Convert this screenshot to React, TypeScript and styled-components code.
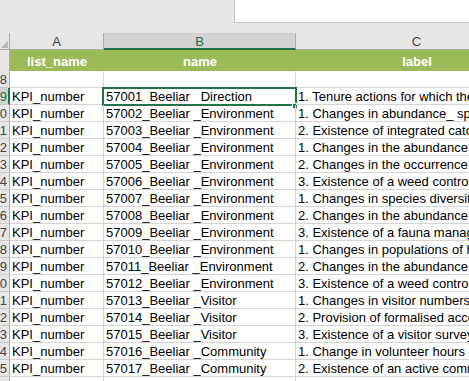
import React from "react";
import styled, { createGlobalStyle, css } from "styled-components";

const GlobalStyle = createGlobalStyle`
  html, body { margin: 0; padding: 0; background: #ffffff; }
  body { font-family: "Liberation Sans", Arial, sans-serif; overflow: hidden; }
`;

const GRID = "#d4d4d4";
const HEAD_LINE = "#ababab";
const HEAD_BG = "#e6e6e6";
const SEL_BG = "#d2d2d2";
const EXCEL_GREEN = "#217346";

const Page = styled.div`
  width: 469px;
  height: 381px;
  overflow: hidden;
  background: #ffffff;
`;

const TopBand = styled.div`
  height: 33px;
  background: #e6e6e6;
  display: flex;
  align-items: flex-start;
`;

const Spacer = styled.div`
  width: 234px;
  flex: none;
`;

const FormulaBox = styled.div`
  flex: 1;
  height: 23px;
  box-sizing: border-box;
  background: #ffffff;
  border-left: 1px solid #c6c6c6;
  border-bottom: 1px solid #c6c6c6;
`;

const Sheet = styled.div`
  display: grid;
  grid-template-columns: 10px 94px 192px 242px;
  grid-auto-rows: 17px;
  grid-template-rows: 17px 21px;
  width: 538px;
  font-size: 13px;
`;

const Corner = styled.div`
  position: relative;
  box-sizing: border-box;
  background: ${HEAD_BG};
  border-right: 1px solid ${HEAD_LINE};
  border-bottom: 1px solid ${HEAD_LINE};
  &::after {
    content: "";
    position: absolute;
    right: 1px;
    bottom: 1px;
    width: 0;
    height: 0;
    border-left: 7px solid transparent;
    border-bottom: 7px solid #b9b9b9;
  }
`;

const ColHeader = styled.div<{ $selected?: boolean }>`
  box-sizing: border-box;
  background: ${HEAD_BG};
  border-right: 1px solid ${HEAD_LINE};
  border-bottom: 1px solid ${HEAD_LINE};
  color: #444444;
  display: flex;
  justify-content: center;
  align-items: center;
  padding-top: 2px;
  line-height: 14px;
  ${(p) =>
    p.$selected &&
    css`
      background: ${SEL_BG};
      color: ${EXCEL_GREEN};
      border-bottom: 2px solid ${EXCEL_GREEN};
    `}
`;

const TitleCell = styled.div`
  box-sizing: border-box;
  background: #9bbb59;
  color: #ffffff;
  font-weight: bold;
  display: flex;
  justify-content: center;
  align-items: center;
  padding-top: 1px;
  white-space: nowrap;
  overflow: hidden;
`;

const TitleHead = styled.div`
  box-sizing: border-box;
  background: ${HEAD_BG};
  border-right: 1px solid ${HEAD_LINE};
`;

const RowHeader = styled.div<{ $selected?: boolean }>`
  box-sizing: border-box;
  background: ${HEAD_BG};
  border-right: 1px solid ${HEAD_LINE};
  border-bottom: 1px solid #c9c9c9;
  color: #444444;
  display: flex;
  justify-content: flex-end;
  align-items: flex-end;
  line-height: 14px;
  overflow: hidden;
  white-space: nowrap;
  padding-right: 2px;
  ${(p) =>
    p.$selected &&
    css`
      background: ${SEL_BG};
      color: ${EXCEL_GREEN};
      border-right: 2px solid ${EXCEL_GREEN};
      padding-right: 1px;
    `}
`;

const Cell = styled.div<{ $active?: boolean }>`
  position: relative;
  box-sizing: border-box;
  border-right: 1px solid ${GRID};
  border-bottom: 1px solid ${GRID};
  color: #000000;
  display: flex;
  align-items: flex-end;
  padding-left: 2px;
  line-height: 14px;
  white-space: pre;
  overflow: ${(p) => (p.$active ? "visible" : "hidden")};
`;

const ActiveText = styled.span`
  display: block;
  align-self: flex-start;
  margin-top: 2px;
  height: 12px;
  line-height: 14px;
  overflow: hidden;
`;

const SelectionBox = styled.div`
  position: absolute;
  left: -2px;
  top: -1px;
  width: 195px;
  height: 19px;
  box-sizing: border-box;
  border: 2px solid ${EXCEL_GREEN};
  pointer-events: none;
`;

const FillHandle = styled.div`
  position: absolute;
  left: 188px;
  top: 14px;
  width: 6px;
  height: 6px;
  box-sizing: border-box;
  background: ${EXCEL_GREEN};
  border: 1px solid #ffffff;
`;

type Row = { num: number; a: string; b: string; c: string };

const rows: Row[] = [
  { num: 8, a: "", b: "", c: "" },
  { num: 9, a: "KPI_number", b: "57001_Beeliar _Direction", c: "1. Tenure actions for which the department is responsible" },
  { num: 10, a: "KPI_number", b: "57002_Beeliar _Environment", c: "1. Changes in abundance_ species of wetland birds" },
  { num: 11, a: "KPI_number", b: "57003_Beeliar _Environment", c: "2. Existence of integrated catchment management" },
  { num: 12, a: "KPI_number", b: "57004_Beeliar _Environment", c: "1. Changes in the abundance of native vegetation" },
  { num: 13, a: "KPI_number", b: "57005_Beeliar _Environment", c: "2. Changes in the occurrence of weeds" },
  { num: 14, a: "KPI_number", b: "57006_Beeliar _Environment", c: "3. Existence of a weed control program" },
  { num: 15, a: "KPI_number", b: "57007_Beeliar _Environment", c: "1. Changes in species diversity of native fauna" },
  { num: 16, a: "KPI_number", b: "57008_Beeliar _Environment", c: "2. Changes in the abundance of feral animals" },
  { num: 17, a: "KPI_number", b: "57009_Beeliar _Environment", c: "3. Existence of a fauna management program" },
  { num: 18, a: "KPI_number", b: "57010_Beeliar _Environment", c: "1. Changes in populations of high priority species" },
  { num: 19, a: "KPI_number", b: "57011_Beeliar _Environment", c: "2. Changes in the abundance of introduced species" },
  { num: 20, a: "KPI_number", b: "57012_Beeliar _Environment", c: "3. Existence of a weed control strategy" },
  { num: 21, a: "KPI_number", b: "57013_Beeliar _Visitor", c: "1. Changes in visitor numbers" },
  { num: 22, a: "KPI_number", b: "57014_Beeliar _Visitor", c: "2. Provision of formalised access and facilities" },
  { num: 23, a: "KPI_number", b: "57015_Beeliar _Visitor", c: "3. Existence of a visitor survey program" },
  { num: 24, a: "KPI_number", b: "57016_Beeliar _Community", c: "1. Change in volunteer hours of community groups" },
  { num: 25, a: "KPI_number", b: "57017_Beeliar _Community", c: "2. Existence of an active community group" },
  { num: 26, a: "", b: "", c: "" },
];

export default function App() {
  return (
    <Page>
      <GlobalStyle />
      <TopBand>
        <Spacer />
        <FormulaBox />
      </TopBand>
      <Sheet>
        <Corner />
        <ColHeader>A</ColHeader>
        <ColHeader $selected>B</ColHeader>
        <ColHeader>C</ColHeader>

        <TitleHead />
        <TitleCell>list_name</TitleCell>
        <TitleCell>name</TitleCell>
        <TitleCell>label</TitleCell>

        {rows.map((r) => {
          const active = r.num === 9;
          return (
            <React.Fragment key={r.num}>
              <RowHeader $selected={active}>{r.num}</RowHeader>
              <Cell>{r.a}</Cell>
              <Cell $active={active}>
                {active ? <ActiveText>{r.b}</ActiveText> : r.b}
                {active && (
                  <SelectionBox>
                    <FillHandle />
                  </SelectionBox>
                )}
              </Cell>
              <Cell>{r.c}</Cell>
            </React.Fragment>
          );
        })}
      </Sheet>
    </Page>
  );
}
